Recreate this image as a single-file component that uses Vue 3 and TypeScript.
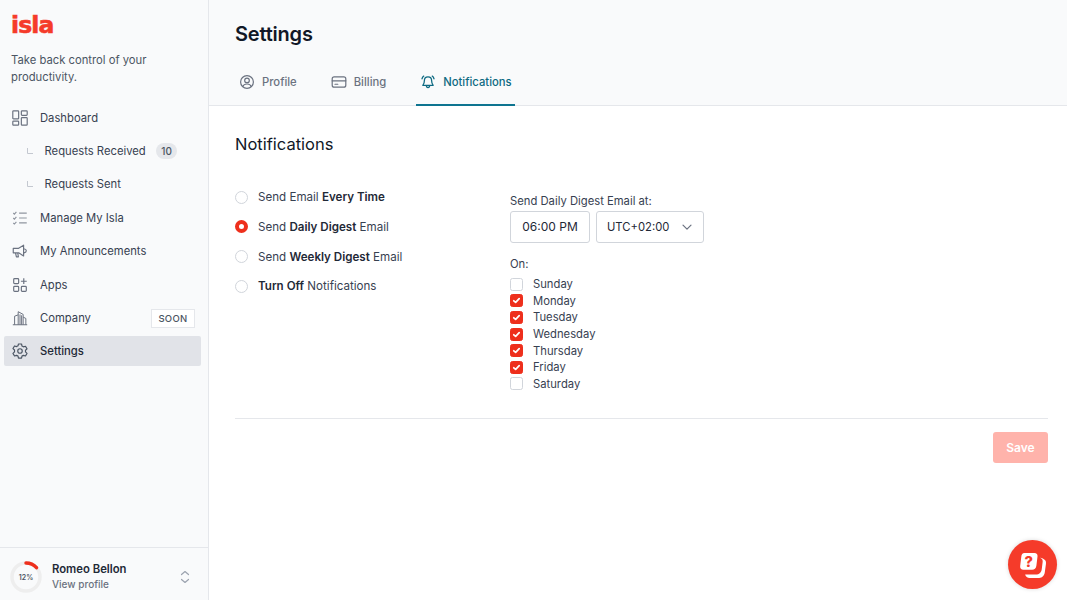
<script setup lang="ts">
const days = [
  { name: 'Sunday', on: false },
  { name: 'Monday', on: true },
  { name: 'Tuesday', on: true },
  { name: 'Wednesday', on: true },
  { name: 'Thursday', on: true },
  { name: 'Friday', on: true },
  { name: 'Saturday', on: false },
]
</script>

<template>
  <div class="app">
    <aside class="side">
      <div class="brand">
        <div class="logo">isla</div>
        <p class="tag">Take back control of your productivity.</p>
      </div>
      <nav class="nav">
        <a class="row">
          <svg class="ic" viewBox="0 0 20 20" fill="none" stroke="#6b7280" stroke-width="1.3"><rect x="2" y="2" width="6.500" height="9" rx=".8"/><rect x="11.500" y="2" width="6.500" height="5" rx=".8"/><rect x="2" y="13.500" width="6.500" height="4.500" rx=".8"/><rect x="11.500" y="9.500" width="6.500" height="8.500" rx=".8"/></svg>
          <span>Dashboard</span>
        </a>
        <a class="row sub">
          <svg class="el" viewBox="0 0 8 8" fill="none" stroke="#c4c8d0" stroke-width="1"><path d="M1.500 1v5.500H7"/></svg>
          <span>Requests Received</span>
          <b class="count">10</b>
        </a>
        <a class="row sub">
          <svg class="el" viewBox="0 0 8 8" fill="none" stroke="#c4c8d0" stroke-width="1"><path d="M1.500 1v5.500H7"/></svg>
          <span>Requests Sent</span>
        </a>
        <a class="row">
          <svg class="ic" viewBox="0 0 20 20" fill="none" stroke="#9095a0" stroke-width="1.300"><path d="M9 4.500h8.500M9 10h8.500M9 15.500h8.500M2.500 4.500l1.300 1.200 2.200-2.400M2.500 10l1.300 1.200 2.200-2.400M2.500 15.500l1.300 1.200 2.200-2.400"/></svg>
          <span>Manage My Isla</span>
        </a>
        <a class="row">
          <svg class="ic" viewBox="0 0 20 20" fill="none" stroke="#6b7280" stroke-width="1.300" stroke-linejoin="round"><path d="M2.500 7h6L14 3.500v12L8.500 12h-6zM14.500 7.500c1.500.3 2.500 1.200 2.500 2.300s-1 2-2.500 2.300M5 12l1 4.500h2.200L7.500 12"/></svg>
          <span>My Announcements</span>
        </a>
        <a class="row">
          <svg class="ic" viewBox="0 0 20 20" fill="none" stroke="#6b7280" stroke-width="1.300"><rect x="3" y="3" width="5.500" height="5.500" rx="1"/><rect x="3" y="11.500" width="5.500" height="5.500" rx="1"/><rect x="11.500" y="11.500" width="5.500" height="5.500" rx="1"/><path d="M14.200 2.500v6.500M11 5.800h6.500"/></svg>
          <span>Apps</span>
        </a>
        <a class="row">
          <svg class="ic" viewBox="0 0 20 20" fill="none" stroke="#6b7280" stroke-width="1.100"><path d="M2 17.500h16M4 17.500V8l4-1.500M8 17.500V3l5.500 3v11.500M13.500 9l3 1.500v7M10 6v11.500M11.800 7v10.500"/></svg>
          <span>Company</span>
          <em class="soon">SOON</em>
        </a>
        <a class="row active">
          <svg class="ic" viewBox="0 0 20 20" fill="none" stroke="#4b5563" stroke-width="1.300" stroke-linejoin="round"><path d="M8.300 2.500h3.400l.5 2.300 1.600.9 2.300-.7 1.700 2.900-1.700 1.600v1.800l1.700 1.600-1.700 2.900-2.300-.7-1.600.9-.5 2.300H8.300l-.5-2.300-1.600-.9-2.300.7-1.700-2.900 1.700-1.600V9.200L2.200 7.600l1.700-2.900 2.300.7 1.600-.9z" transform="translate(0 -.3)"/><circle cx="10" cy="10" r="2.500"/></svg>
          <span>Settings</span>
        </a>
      </nav>
      <div class="me">
        <div class="ring">
          <svg viewBox="0 0 32 32" width="32" height="32" fill="none">
            <circle cx="16" cy="16" r="14" stroke="#eeeeee" stroke-width="3.500"/>
            <path d="M16 2a14 14 0 0 1 10.500 4.700" stroke="#ee2f1c" stroke-width="3.500" stroke-linecap="round"/>
          </svg>
          <span>12%</span>
        </div>
        <div class="who">
          <strong>Romeo Bellon</strong>
          <small>View profile</small>
        </div>
        <svg class="updown" viewBox="0 0 10 14" fill="none" stroke="#9ca3af" stroke-width="1.200" stroke-linecap="round" stroke-linejoin="round"><path d="M1.500 4.500L5 1.500l3.500 3M1.500 9.500l3.500 3 3.500-3"/></svg>
      </div>
    </aside>

    <main class="main">
      <header class="head">
        <h1>Settings</h1>
        <div class="tabs">
          <a class="tab">
            <svg viewBox="0 0 20 20" fill="none" stroke="#6b7280" stroke-width="1.500"><circle cx="10" cy="10" r="8"/><circle cx="10" cy="8" r="2.900"/><path d="M4.500 15.800c1-2.200 3.200-3.300 5.500-3.300s4.500 1.100 5.500 3.300"/></svg>
            Profile
          </a>
          <a class="tab">
            <svg viewBox="0 0 20 20" fill="none" stroke="#6b7280" stroke-width="1.500" stroke-linecap="round"><rect x="1.500" y="3.500" width="17" height="13" rx="2.500"/><path d="M1.500 8.500h17M5 12.800h3.500"/></svg>
            Billing
          </a>
          <a class="tab on">
            <svg viewBox="0 0 20 20" fill="none" stroke="#0e6a82" stroke-width="1.600" stroke-linecap="round" stroke-linejoin="round"><path d="M10 3.500c-2.800 0-4.500 2-4.500 4.700 0 3-.9 4.800-2 6h13c-1.100-1.200-2-3-2-6 0-2.700-1.700-4.700-4.500-4.700zM8 14.500c0 1.500.8 2.500 2 2.500s2-1 2-2.500M2.500 6c.4-1.400 1.100-2.500 2.200-3.400M17.500 6c-.4-1.400-1.100-2.500-2.200-3.400"/></svg>
            Notifications
          </a>
        </div>
      </header>

      <section class="body">
        <h2>Notifications</h2>
        <div class="cols">
          <div class="radios">
            <label class="radio"><i class="dot"></i><span>Send Email <b>Every Time</b></span></label>
            <label class="radio"><i class="dot sel"></i><span>Send <b>Daily Digest</b> Email</span></label>
            <label class="radio"><i class="dot"></i><span>Send <b>Weekly Digest</b> Email</span></label>
            <label class="radio"><i class="dot"></i><span><b>Turn Off</b> Notifications</span></label>
          </div>
          <div class="opts">
            <div class="lbl">Send Daily Digest Email at:</div>
            <div class="fields">
              <div class="field time">06:00 PM</div>
              <div class="field zone">
                UTC+02:00
                <svg viewBox="0 0 12 12" width="12" height="12" fill="none" stroke="#6b7280" stroke-width="1.200" stroke-linecap="round" stroke-linejoin="round"><path d="M2 4.200l4 4 4-4"/></svg>
              </div>
            </div>
            <div class="lbl on-lbl">On:</div>
            <div class="days">
              <label v-for="d in days" :key="d.name" class="day">
                <i class="box" :class="{ checked: d.on }">
                  <svg v-if="d.on" viewBox="0 0 13 13" width="13" height="13" fill="none" stroke="#fff" stroke-width="2" stroke-linecap="round" stroke-linejoin="round"><path d="M3.300 6.800l2.200 2 4.200-4.500"/></svg>
                </i>
                {{ d.name }}
              </label>
            </div>
          </div>
        </div>
        <div class="foot">
          <button class="save" type="button">Save</button>
        </div>
      </section>
    </main>

    <button class="help" type="button" aria-label="Help">
      <svg viewBox="0 0 32 32" width="36" height="36">
        <path d="M22.300 9.500c1.800.2 3.200.9 4.300 2 .9.900 1.100 2 .9 3.500l-1 7.500c-.4 3-2.300 5-5 5H13c-2 0-3.500-1-4-3h9.500c3 0 5-2 5.300-5l.8-6.500c.2-1.600-.6-2.800-2.300-3.500z" fill="#fff"/>
        <path d="M8.500 5.300h8.700c2 0 3.100 1.200 2.800 3.100l-1 8.200c-.3 2.200-1.800 3.600-3.800 3.600H7.500c-2 0-3.200-1.400-2.900-3.300l1-8.300c.2-2 1-3.300 2.900-3.300z" fill="#fff"/>
        <text x="12.200" y="17.500" text-anchor="middle" class="q">?</text>
      </svg>
    </button>
  </div>
</template>

<style>
html, body { margin: 0; background: #fff; }
</style>

<style scoped>
.app {
  display: flex;
  width: 1067px;
  height: 600px;
  overflow: hidden;
  position: relative;
  font-family: Inter, "Liberation Sans", sans-serif;
  font-size: 11.250px;
  color: #374151;
}
.side {
  width: 208px;
  flex: none;
  display: flex;
  flex-direction: column;
  background: #f9fafb;
  border-right: 1px solid #e5e7eb;
}
.brand { padding: 12px 11px 0; height: 88px; box-sizing: border-box; }
.logo {
  font-family: "DejaVu Sans", sans-serif;
  font-weight: 700;
  font-size: 23.500px;
  line-height: 26px;
  letter-spacing: -.9px;
  color: #f53b2a;
  -webkit-text-stroke: .6px #f53b2a;
}
.tag { margin: 14px 0 0; line-height: 17px; color: #4b5563; }
.nav { display: flex; flex-direction: column; gap: 3.400px; padding: 14.700px 7px 0 4px; }
.row {
  display: flex;
  align-items: center;
  height: 30px;
  padding: 0 6px 0 7px;
  border-radius: 2px;
  color: #374151;
}
.ic { width: 18px; height: 18px; flex: none; margin-right: 11px; }
.sub { padding-left: 22px; }
.el { width: 8px; height: 8px; flex: none; margin-right: 10.500px; }
.count {
  margin-left: 10px;
  padding: 0 5.500px;
  height: 16px;
  line-height: 16px;
  border-radius: 8px;
  background: #e5e7eb;
  font-size: 10px;
  font-weight: 500;
  color: #4b5563;
}
.soon {
  margin-left: auto;
  border: 1px solid #e5e7eb;
  background: #fff;
  font-style: normal;
  font-weight: 500;
  font-size: 9.500px;
  letter-spacing: .3px;
  line-height: 17px;
  padding: 0 6.500px;
  color: #4b5563;
}
.active { background: #e1e3e8; color: #1f2937; font-weight: 500; }
.me {
  margin-top: auto;
  height: 53px;
  box-sizing: border-box;
  border-top: 1px solid #e5e7eb;
  display: flex;
  align-items: center;
  padding: 6px 17px 0 10px;
}
.ring { position: relative; width: 32px; height: 32px; flex: none; margin-right: 10px; }
.ring span {
  position: absolute;
  inset: 0;
  display: flex;
  align-items: center;
  justify-content: center;
  font-size: 7px;
  font-weight: 600;
  color: #4b5563;
}
.who { display: flex; flex-direction: column; flex: 1; line-height: 15px; }
.who strong { font-weight: 600; font-size: 11.300px; color: #1f2937; }
.who small { font-weight: 500; font-size: 10px; color: #6b7280; }
.updown { width: 10px; height: 14px; margin-right: 1px; }

.main { flex: 1; min-width: 0; display: flex; flex-direction: column; }
.head {
  height: 106px;
  box-sizing: border-box;
  background: #f9fafb;
  border-bottom: 1px solid #e5e7eb;
  padding: 19px 26px 0;
  display: flex;
  flex-direction: column;
}
h1 { margin: 0; font-size: 20px; line-height: 30px; font-weight: 600; color: #111827; letter-spacing: -.2px; }
.tabs { display: flex; gap: 26px; margin-top: 15px; margin-bottom: -1px; flex: 1; }
.tab {
  display: flex;
  align-items: center;
  gap: 7px;
  padding: 0 4px 3.500px;
  font-weight: 500;
  color: #6b7280;
  border-bottom: 2px solid transparent;
  box-sizing: border-box;
}
.tab svg { width: 16px; height: 16px; }
.tab.on { color: #0e6a82; border-bottom-color: #0e7490; padding-right: 3px; }

.body { padding: 26px 19px 0 26px; display: flex; flex-direction: column; }
h2 { margin: 0; font-size: 16.500px; line-height: 24px; font-weight: 400; color: #111827; }
.cols { display: flex; margin-top: 33px; padding-bottom: 26px; border-bottom: 1px solid #e5e7eb; }
.radios { width: 275px; display: flex; flex-direction: column; gap: 13.800px; flex: none; font-size: 11.600px; }
.radio { display: flex; align-items: center; gap: 10px; height: 16px; }
.dot {
  width: 13px;
  height: 13px;
  box-sizing: border-box;
  border-radius: 50%;
  border: 1px solid #d1d5db;
  background: #fff;
  flex: none;
}
.dot.sel { border: 4px solid #ee2f1c; }
.radio b { font-weight: 600; color: #1f2937; }
.opts { padding-top: 4px; }
.lbl { line-height: 16px; color: #374151; }
.fields { display: flex; gap: 6px; margin-top: 1.500px; }
.field {
  height: 32px;
  box-sizing: border-box;
  border: 1px solid #d1d5db;
  border-radius: 3px;
  background: #fff;
  display: flex;
  align-items: center;
  color: #1f2937;
}
.time { width: 80px; justify-content: center; font-size: 12px; }
.zone { width: 108px; padding: 0 10px; justify-content: space-between; }
.on-lbl { margin-top: 13.500px; }
.days { display: flex; flex-direction: column; margin-top: 4px; }
.day { display: flex; align-items: center; gap: 10px; height: 16.600px; color: #374151; }
.box {
  width: 13px;
  height: 13px;
  flex: none;
  box-sizing: border-box;
  border: 1px solid #d1d5db;
  border-radius: 2.500px;
  background: #fff;
  display: flex;
  align-items: center;
  justify-content: center;
}
.box.checked { background: #ee2f1c; border-color: #ee2f1c; }
.foot { display: flex; justify-content: flex-end; padding-top: 13px; }
.save {
  width: 55px;
  height: 31px;
  border: 0;
  border-radius: 3px;
  background: #ffb3ab;
  color: #fff;
  font: 600 12px Inter, "Liberation Sans", sans-serif;
}
.help {
  position: absolute;
  right: 10px;
  bottom: 11px;
  width: 49px;
  height: 49px;
  border: 0;
  padding: 0;
  border-radius: 50%;
  background: #f53b2a;
  box-shadow: 0 0 4px rgba(0, 0, 0, .15);
  display: flex;
  align-items: center;
  justify-content: center;
}
.q { font: 800 13px Inter, sans-serif; fill: #f53b2a; }
</style>
